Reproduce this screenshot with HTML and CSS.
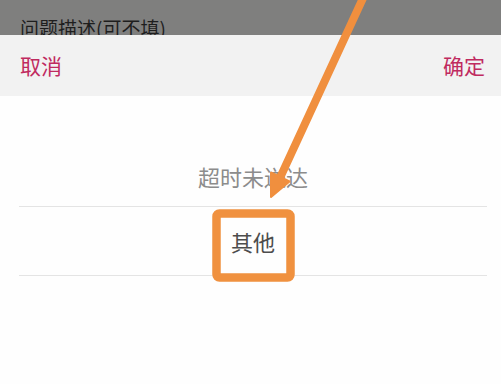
FILE: index.html
```html
<!DOCTYPE html>
<html lang="zh-CN">
<head>
<meta charset="utf-8">
<link rel="stylesheet" href="styles.css">
</head>
<body>
<div class="screen">
  <div class="backdrop">
    <div class="backdrop-label">问题描述(可不填)</div>
  </div>
  <div class="sheet">
    <div class="sheet-header">
      <span class="action">取消</span>
      <span class="action">确定</span>
    </div>
    <div class="picker">
      <div class="option option-dim">超时未送达</div>
      <div class="option option-selected">其他</div>
      <div class="option option-empty"></div>
    </div>
  </div>
  <svg class="annotation" width="501" height="384" viewBox="0 0 501 384" xmlns="http://www.w3.org/2000/svg">
    <line x1="364" y1="-4" x2="279" y2="180" stroke="#f08f3e" stroke-width="8" stroke-linecap="round"/>
    <polygon points="271,197 289.5,181.5 271,172.5" fill="#f08f3e" stroke="#f08f3e" stroke-width="2" stroke-linejoin="round"/>
    <rect x="216.5" y="213.5" width="74" height="64" rx="3" fill="none" stroke="#f0913f" stroke-width="8.5"/>
  </svg>
</div>
</body>
</html>
```

FILE: styles.css
```css
html, body {
  margin: 0;
  padding: 0;
  background: #fefefe;
}

.screen {
  position: relative;
  width: 501px;
  height: 384px;
  overflow: hidden;
  display: flex;
  flex-direction: column;
  font-family: "Noto Sans CJK SC", "Noto Sans", sans-serif;
}

.backdrop {
  height: 35px;
  background: #7f7f7e;
  overflow: hidden;
  padding-left: 20px;
  box-sizing: border-box;
}

.backdrop-label {
  font-size: 19px;
  line-height: 28px;
  padding-top: 14px;
  color: #1e1e1e;
  white-space: nowrap;
}

.sheet {
  flex: 1;
  display: flex;
  flex-direction: column;
  background: #fefefe;
}

.sheet-header {
  height: 61px;
  background: #f2f2f2;
  display: flex;
  align-items: center;
  justify-content: space-between;
  padding: 0 16px 0 20px;
  box-sizing: border-box;
}

.action {
  font-size: 21px;
  color: #c02a5f;
  line-height: 28px;
  padding-bottom: 2px;
}

.picker {
  display: flex;
  flex-direction: column;
  margin: 0 14px 0 19px;
  padding-top: 66px;
}

.option {
  text-align: center;
  font-size: 22px;
}

.option-dim {
  line-height: 28px;
  color: #8c8c8c;
  margin-bottom: 16px;
}

.option-selected {
  height: 68px;
  line-height: 68px;
  color: #4d4d4d;
  border-top: 1px solid #e4e4e4;
  border-bottom: 1px solid #e4e4e4;
}

.option-empty {
  height: 68px;
}

.annotation {
  position: absolute;
  left: 0;
  top: 0;
  pointer-events: none;
}
```
